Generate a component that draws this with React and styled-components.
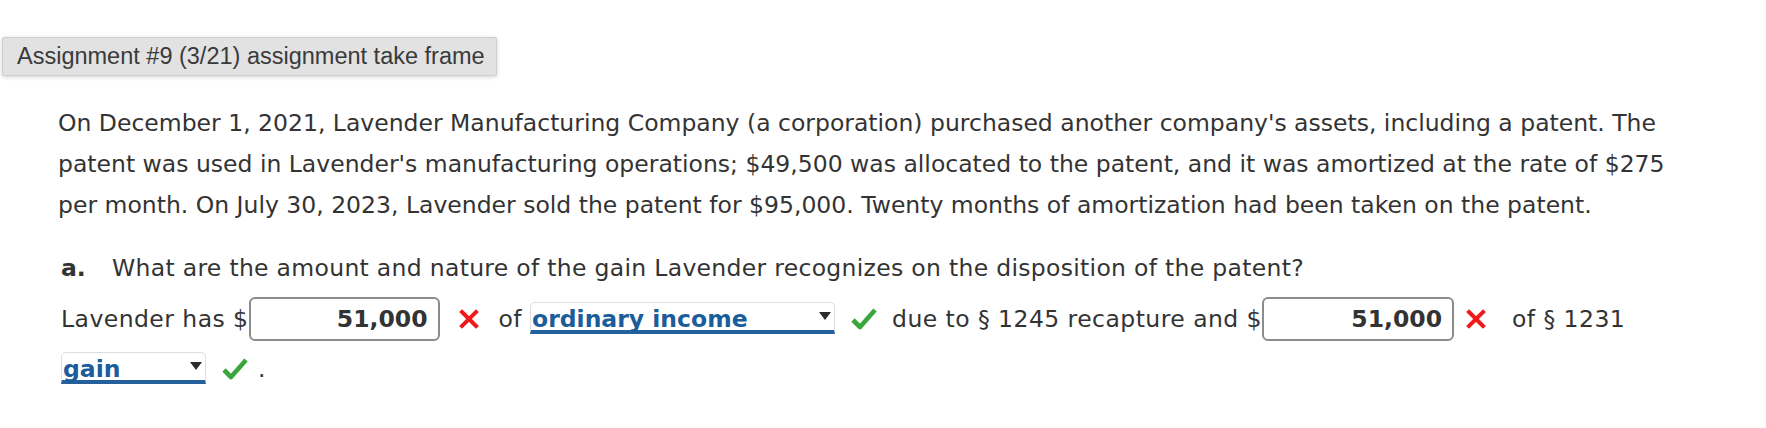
import React from 'react';
import styled, { createGlobalStyle } from 'styled-components';

const GlobalStyle = createGlobalStyle`
    html, body {
        margin: 0;
        padding: 0;
        background: #ffffff;
    }
`;

const Page = styled.div`
    width: 1766px;
    height: 428px;
    overflow: hidden;
    padding-top: 37px;
    box-sizing: border-box;
    font-family: 'DejaVu Sans', Verdana, sans-serif;
    color: #333333;
`;

const FrameTab = styled.div`
    margin-left: 2px;
    width: 495px;
    height: 39px;
    box-sizing: border-box;
    display: flex;
    align-items: center;
    padding-left: 14px;
    background: #e2e2e2;
    border: 1px solid #cfcfcf;
    border-radius: 2px;
    box-shadow: 0 1px 4px rgba(0,0,0,0.18);
    font-family: 'Liberation Sans', Arial, sans-serif;
    font-size: 23.5px;
    color: #3a3a3a;
`;

const Content = styled.div`
    padding: 27px 66px 0 58px;
    font-size: 23.5px;
`;

const Problem = styled.p`
    margin: 0;
    line-height: 41px;
`;

const Question = styled.div`
    margin-top: 22px;
    padding-left: 3px;
    line-height: 41px;
    letter-spacing: 0.3px;
`;

const PartLabel = styled.span`
    display: inline-block;
    width: 51px;
    font-weight: bold;
    letter-spacing: 0;
`;

const Answer = styled.div`
    margin-top: 5px;
    padding-left: 3px;
    line-height: 50px;
    letter-spacing: 0.45px;
`;

const AmountBox = styled.span`
    display: inline-block;
    vertical-align: middle;
    width: ${p => p.$width}px;
    height: 44px;
    box-sizing: border-box;
    border: 2px solid #8c8c8c;
    border-radius: 6px;
    padding-right: 10px;
    text-align: right;
    font-weight: bold;
    line-height: 40px;
    letter-spacing: 0;
    margin-top: -4px;
`;

const Select = styled.span`
    position: relative;
    display: inline-block;
    vertical-align: middle;
    width: ${p => p.$width}px;
    height: 27px;
    box-sizing: content-box;
    border: 1px solid #dedede;
    border-bottom: 4px solid #24609a;
    border-radius: 5px 5px 0 0;
    background: #ffffff;
    color: #1b5c9a;
    font-weight: bold;
    line-height: 24px;
    padding-left: 1px;
    text-align: left;
    letter-spacing: 0;
    margin-top: -6px;
`;

const SelectText = styled.span`
    display: block;
    padding-top: 4px;
`;

const Arrow = styled.span`
    position: absolute;
    right: 3px;
    top: 9px;
    width: 0;
    height: 0;
    border-left: 6px solid transparent;
    border-right: 6px solid transparent;
    border-top: 8px solid #2b2b2b;
`;

const Mark = styled.svg`
    display: inline-block;
    vertical-align: middle;
    margin: -4px ${p => p.$right}px 0 ${p => p.$left}px;
`;

const Wrong = ({ left = 18, right = 18 }) => (
    <Mark $left={left} $right={right} width="20" height="20" viewBox="0 0 20 20">
        <path d="M3 3 L17 17 M17 3 L3 17" stroke="#f01a1a" strokeWidth="4" strokeLinecap="square" fill="none" />
    </Mark>
);

const Right = ({ left = 18, right = 18 }) => (
    <Mark $left={left} $right={right} width="26" height="24" viewBox="0 0 26 24">
        <path d="M2 13 L9 20 L24 3" stroke="#3aa53a" strokeWidth="4.6" strokeLinejoin="round" fill="none" />
    </Mark>
);

const App = () => {
    return (
        <Page>
            <GlobalStyle />
            <FrameTab>Assignment #9 (3/21) assignment take frame</FrameTab>

            <Content>
                <Problem>
                    On December 1, 2021, Lavender Manufacturing Company (a corporation) purchased another company's assets, including a patent. The patent was used in Lavender's manufacturing operations; $49,500 was allocated to the patent, and it was amortized at the rate of $275 per month. On July 30, 2023, Lavender sold the patent for $95,000. Twenty months of amortization had been taken on the patent.
                </Problem>

                <Question>
                    <PartLabel>a.</PartLabel>What are the amount and nature of the gain Lavender recognizes on the disposition of the patent?
                </Question>

                <Answer>
                    Lavender has $<AmountBox $width={191}>51,000</AmountBox><Wrong left={19} right={20} />of <Select $width={302}><SelectText>ordinary income</SelectText><Arrow /></Select><Right left={16} right={15} />due to § 1245 recapture and $<AmountBox $width={192}>51,000</AmountBox><Wrong left={12} right={26} />of § 1231 <Select $width={142}><SelectText>gain</SelectText><Arrow /></Select><Right left={16} right={10} />.
                </Answer>
            </Content>
        </Page>
    );
};

export default App;
